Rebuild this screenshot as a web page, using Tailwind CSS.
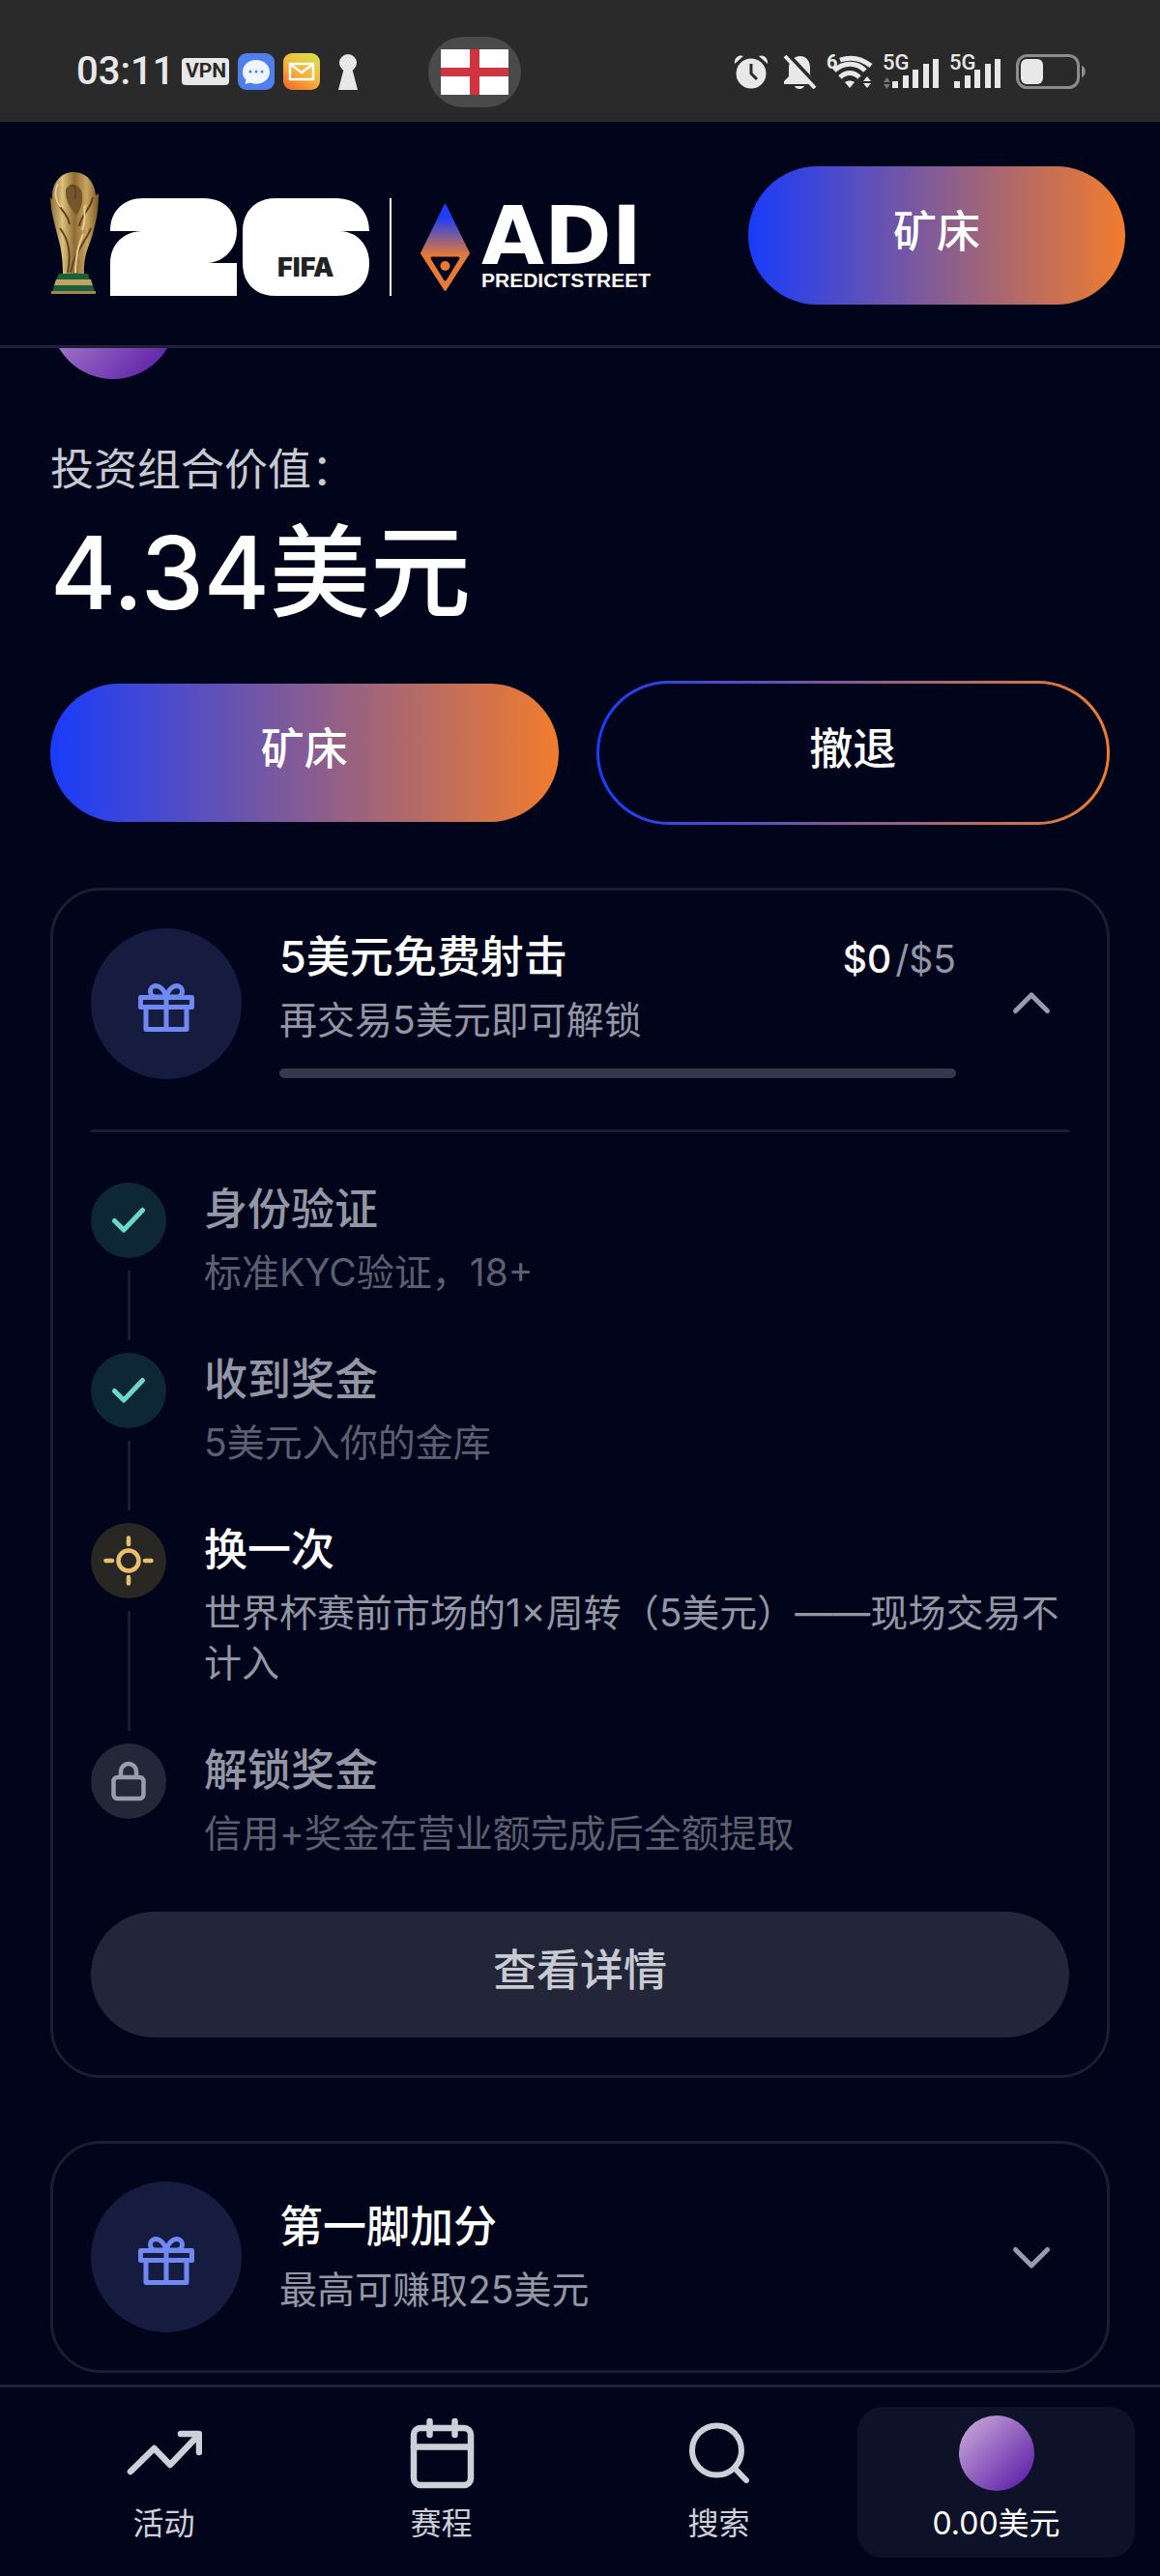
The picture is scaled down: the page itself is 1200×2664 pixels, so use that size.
<!DOCTYPE html>
<html lang="zh-CN">
<head>
    <meta charset="UTF-8">
    <meta name="viewport" content="width=device-width, initial-scale=1.0">
    <title>ADI Predictstreet</title>
    <script src="https://cdn.jsdelivr.net/npm/@tailwindcss/browser@4"></script>
</head>
<body class="flex min-h-screen flex-col bg-[#01051b] font-['Inter','Noto_Sans_CJK_SC',sans-serif] text-white">

    <!-- Shared icons -->
    <svg class="hidden">
        <symbol id="gift" viewBox="0 0 78 78">
            <g transform="translate(10 18)" fill="none" stroke="#7088f2" stroke-width="5" stroke-linejoin="round">
                <rect x="2.5" y="14.5" width="53" height="10"/>
                <path d="M8 24.5V47.5H50V24.5M29 14.5V47.5"/>
                <path d="M29 14C27 6 22 2.5 17.5 2.5A5.8 5.8 0 0 0 17.5 14ZM29 14C31 6 36 2.5 40.5 2.5A5.8 5.8 0 0 1 40.5 14Z"/>
            </g>
        </symbol>
        <symbol id="check" viewBox="0 0 78 78">
            <path d="M24.5 39.5L34 49L53.5 28.5" fill="none" stroke="#6cd9c8" stroke-width="5" stroke-linecap="round" stroke-linejoin="round"/>
        </symbol>
        <symbol id="chevron" viewBox="0 0 78 78">
            <path d="M22.5 46.5L39 30L55.5 46.5" fill="none" stroke="#989ba9" stroke-width="5" stroke-linecap="round" stroke-linejoin="round"/>
        </symbol>
    </svg>

    <!-- Status bar -->
    <div class="flex h-[126px] items-center bg-[#2a2a2a] pt-[22px] pr-[76px] pl-[79px] text-[#e8e8e8]">
        <span class="font-['Roboto',sans-serif] text-[40px] leading-none font-medium">03:11</span>
        <div class="ml-2 flex items-center gap-[9px]">
            <span class="flex h-[28px] w-[49px] items-center justify-center rounded-[4px] bg-[#e8e8e8] font-['Roboto',sans-serif] text-[21px] font-bold text-[#2a2a2a]">VPN</span>
            <svg class="size-[38px]" viewBox="0 0 38 38">
                <rect width="38" height="38" rx="9" fill="#4f7fec"/>
                <path d="M19 7C11 7 5 12 5 19.500C5 23 6 25 8.500 27.500L7.500 32L13 30.500C15 31.500 17 31.800 19 31.800C27 31.800 33 26.500 33 19.500S27 7 19 7Z" fill="#eef5ff"/>
                <circle cx="13" cy="19" r="1.500" fill="#4f7fec"/><circle cx="19" cy="19" r="1.500" fill="#4f7fec"/><circle cx="25" cy="19" r="1.500" fill="#4f7fec"/>
            </svg>
            <svg class="size-[38px]" viewBox="0 0 38 38">
                <defs>
                    <linearGradient id="mail" x1="0.2" y1="1" x2="0.8" y2="0">
                        <stop offset="0" stop-color="#f0702c"/><stop offset="0.45" stop-color="#f8b03a"/><stop offset="1" stop-color="#d8e04a"/>
                    </linearGradient>
                </defs>
                <rect width="38" height="38" rx="9" fill="url(#mail)"/>
                <path d="M7 11H31V27H7ZM8 12L19 20L30 12" fill="none" stroke="#fff" stroke-width="2.500" stroke-linejoin="round"/>
            </svg>
            <svg class="ml-[10px] h-[37px] w-[20px]" viewBox="0 0 20 37">
                <circle cx="10" cy="9" r="9" fill="#e8e8e8"/><path d="M6 14H14L20 37H0Z" fill="#e8e8e8"/>
            </svg>
        </div>
        <div class="ml-[73px] flex h-[73px] w-[96px] items-center justify-center rounded-full bg-[#4a4a4a]">
            <svg class="h-[47px] w-[70px]" viewBox="0 0 70 47">
                <path d="M0 0H70V47H0Z" fill="#fff"/><path d="M30 0H40V47H30ZM0 19H70V28H0Z" fill="#d0343f"/>
            </svg>
        </div>
        <div class="ml-auto flex items-center gap-[10px] font-['Roboto',sans-serif]">
            <svg class="mr-[5px] h-[36px] w-[36px]" viewBox="0 0 36 36">
                <path d="M1 10C0 4 5 0 10 2ZM35 10C36 4 31 0 26 2Z" fill="#e8e8e8"/>
                <circle cx="18" cy="20" r="15.500" fill="#e8e8e8"/>
                <path d="M18 10V20L24 26" fill="none" stroke="#2a2a2a" stroke-width="3"/>
            </svg>
            <svg class="h-[36px] w-[35px]" viewBox="0 0 35 36">
                <path d="M18 2C24 2 28 7 28 14V21L32 28V31H1V28L6 23V14C6 7 11 2 18 2ZM12 33H22C21 37 13 37 12 33Z" fill="#e8e8e8"/>
                <path d="M5 0L37 34" stroke="#2a2a2a" stroke-width="4"/>
                <path d="M2 2L33 35" stroke="#e8e8e8" stroke-width="4"/>
            </svg>
            <svg class="h-[38px] w-[48px] overflow-visible" viewBox="0 0 48 38">
                <g fill="none" stroke="#e8e8e8" stroke-width="5">
                    <path d="M14 7C26 3 37 6 46 13"/><path d="M8 18C18 9 31 9 40 18"/><path d="M14 25C20 19 28 19 34 25"/>
                </g>
                <path d="M19 30C22 28 26 28 29 30L24 36ZM38 29L42 24L46 29ZM38 31H46L42 36Z" fill="#e8e8e8"/>
                <text x="0" y="16" font-size="20" font-weight="700" fill="#e8e8e8">6</text>
            </svg>
            <svg class="h-[36px] w-[59px] overflow-visible" viewBox="0 0 59 36">
                <text x="0" y="16" font-size="22" font-weight="500" fill="#e8e8e8">5G</text>
                <path d="M10 28H16V35H10ZM21 22H27V35H21ZM31 16H37V35H31ZM42 10H48V35H42ZM52 5H58V35H52Z" fill="#e8e8e8"/>
                <path d="M1 29L4.500 24L8 29ZM1 31H8L4.500 36Z" fill="#777"/>
            </svg>
            <svg class="h-[36px] w-[55px] overflow-visible" viewBox="0 0 55 36">
                <text x="0" y="16" font-size="22" font-weight="500" fill="#e8e8e8">5G</text>
                <path d="M5 28H11V35H5ZM16 22H22V35H16ZM26 16H32V35H26ZM37 10H43V35H37ZM47 5H53V35H47Z" fill="#e8e8e8"/>
            </svg>
            <svg class="ml-1 h-[36px] w-[73px]" viewBox="0 0 73 36">
                <rect x="1.500" y="1.500" width="63" height="33" rx="10" fill="none" stroke="#8c8c8c" stroke-width="3"/>
                <rect x="5" y="5" width="23" height="26" rx="6" fill="#e8e8e8"/>
                <path d="M68 12C73 13 73 23 68 24Z" fill="#8c8c8c"/>
            </svg>
        </div>
    </div>

    <!-- Header -->
    <header class="flex items-center justify-between border-b-[3px] border-[#1f2237] pt-[46px] pr-9 pb-[42px] pl-[52px]">
        <a href="#" class="flex items-end pb-1" aria-label="FIFA 26 ADI Predictstreet">
            <svg class="h-[128px] w-[50px]" viewBox="0 0 50 128">
                <defs>
                    <linearGradient id="gold" x1="0" x2="1">
                        <stop offset="0" stop-color="#8a6a35"/><stop offset="0.25" stop-color="#dcc07c"/><stop offset="0.5" stop-color="#8f6b34"/><stop offset="0.75" stop-color="#c9a560"/><stop offset="1" stop-color="#7a5827"/>
                    </linearGradient>
                </defs>
                <path d="M24 0C38 0 46 11 47 24L50 22C50 45 46 55 44 64C41 76 34 84 35 106H13C13 88 11 78 7 64C4 50 1 44 0 26L2 28C1 11 11 0 24 0Z" fill="url(#gold)"/>
                <path d="M16 18C20 10 30 11 33 22C34 32 31 40 27 44C21 38 15 30 16 18Z" fill="#76552a"/>
                <path d="M21 14C26 12 28 20 25 28M6 28C10 40 18 42 20 54M44 26C42 38 32 44 30 56M10 58C18 68 22 84 18 104M42 58C38 70 24 84 21 104" fill="none" stroke="#5f431f" stroke-width="2"/>
                <path d="M8 12C3 20 6 32 11 36M36 34C34 44 38 48 33 60M34 64C28 78 26 90 26 104" fill="none" stroke="#e6cd8c" stroke-width="2"/>
                <path d="M9 105H39L41 112H6Z" fill="#17613f"/><path d="M6 111H42L44 117H4Z" fill="#c2a25e"/>
                <path d="M4 117H44L46 124H2Z" fill="#17613f"/><path d="M1 123H47V126H1Z" fill="#a88348"/>
            </svg>
            <svg class="ml-3 h-[101px] w-[268px]" viewBox="0 0 268 101">
                <g fill="#fff">
                    <path d="M0 34C0 13 14 0 34 0H97C118 0 131 14 131 34C131 52 118 66 101 67H131V101H0V67C0 48 13 35 32 34Z"/>
                    <path d="M171 0H234C255 0 268 14 268 34H237C255 34 268 48 268 67C268 88 255 101 234 101H171C150 101 137 88 137 67V34C137 14 150 0 171 0Z"/>
                </g>
                <text x="173" y="81" font-size="27" font-weight="900" fill="#222">FIFA</text>
            </svg>
            <div class="ml-[21px] h-[101px] w-[2px] bg-white"></div>
            <svg class="ml-[30px] h-[95px] w-[51px]" viewBox="0 0 51 95">
                <defs>
                    <linearGradient id="gem" x1="0" y1="0" x2="0" y2="1">
                        <stop offset="0.15" stop-color="#1d3ff5"/><stop offset="0.6" stop-color="#e87a35"/>
                    </linearGradient>
                </defs>
                <path d="M25.500 1L50 51L25.500 89L1 51Z" fill="url(#gem)" stroke="url(#gem)" stroke-width="2" stroke-linejoin="round"/>
                <path d="M12 56H39L25.500 78Z" fill="#01051b" stroke="#01051b" stroke-width="3" stroke-linejoin="round"/>
                <circle cx="25.500" cy="64" r="5" fill="#e87a35"/>
            </svg>
            <div class="ml-3 flex flex-col pb-1">
                <span class="font-['DejaVu_Sans',sans-serif] text-[84px] leading-[68px] font-bold">ADI</span>
                <span class="font-['Liberation_Sans',sans-serif] text-[21px] leading-6 font-bold">PREDICTSTREET</span>
            </div>
        </a>
        <button class="h-[143px] w-[390px] rounded-full bg-linear-to-r/srgb from-[#193cfb] to-[#f17c2d] pb-2 text-[45px] font-medium">矿床</button>
    </header>

    <main class="px-[52px] pb-3">
        <!-- Profile avatar, scrolled under the header -->
        <div class="flex h-8 items-end overflow-hidden">
            <div class="size-[130px] shrink-0 rounded-full bg-linear-to-br/srgb from-[#d0b2dc] to-[#5312a4]"></div>
        </div>

        <!-- Portfolio value -->
        <p class="mt-[66px] text-[45px] leading-[56px] text-[#c8cad2]">投资组合价值：</p>
        <h1 class="mt-[10px] text-[104px] leading-[136px] font-medium">4.34美元</h1>

        <div class="mt-11 flex items-center gap-[39px]">
            <button class="h-[143px] flex-1 rounded-full bg-linear-to-r/srgb from-[#193cfb] to-[#f17c2d] pb-2 text-[45px] font-medium">矿床</button>
            <button class="h-[149px] flex-1 rounded-full bg-linear-to-r/srgb from-[#193cfb] to-[#f17c2d] p-[3px] text-[45px] font-medium">
                <span class="flex h-full items-center justify-center rounded-full bg-[#01051b] pb-2">撤退</span>
            </button>
        </div>

        <!-- Free shot card -->
        <section class="mt-[65px] rounded-[52px] border-[3px] border-[#1a1e32] p-[39px]">
            <div class="flex items-center">
                <div class="flex size-[156px] items-center justify-center rounded-full bg-[#161c40]">
                    <svg class="size-[78px]"><use href="#gift"/></svg>
                </div>
                <div class="ml-[39px] flex-1">
                    <div class="flex items-baseline justify-between">
                        <h2 class="text-[45px] leading-[56px] font-medium">5美元免费射击</h2>
                        <p class="text-[39px] leading-[52px] text-[#9396a3]"><span class="mr-1 font-medium text-white">$0</span>/$5</p>
                    </div>
                    <p class="mt-[11px] text-[39px] leading-[52px] text-[#9396a3]">再交易5美元即可解锁</p>
                    <div class="mt-6 h-[10px] rounded-full bg-[#35384a]"></div>
                </div>
                <button class="ml-[39px]" aria-label="收起"><svg class="size-[78px]"><use href="#chevron"/></svg></button>
            </div>

            <ol class="mt-[52px] border-t-[3px] border-[#1a1e32] pt-[52px]">
                <li class="flex gap-[39px]">
                    <div class="flex flex-col items-center">
                        <div class="size-[78px] rounded-full bg-[#0d2737]"><svg class="size-[78px]"><use href="#check"/></svg></div>
                        <div class="my-[13px] w-[3px] flex-1 bg-[#1a1d32]"></div>
                    </div>
                    <div class="flex-1 pb-[57px]">
                        <h3 class="text-[45px] leading-[56px] font-medium text-[#9396a3]">身份验证</h3>
                        <p class="mt-[11px] text-[39px] leading-[52px] text-[#5c5f70]">标准KYC验证，18+</p>
                    </div>
                </li>
                <li class="flex gap-[39px]">
                    <div class="flex flex-col items-center">
                        <div class="size-[78px] rounded-full bg-[#0d2737]"><svg class="size-[78px]"><use href="#check"/></svg></div>
                        <div class="my-[13px] w-[3px] flex-1 bg-[#1a1d32]"></div>
                    </div>
                    <div class="flex-1 pb-[57px]">
                        <h3 class="text-[45px] leading-[56px] font-medium text-[#9396a3]">收到奖金</h3>
                        <p class="mt-[11px] text-[39px] leading-[52px] text-[#5c5f70]">5美元入你的金库</p>
                    </div>
                </li>
                <li class="flex gap-[39px]">
                    <div class="flex flex-col items-center">
                        <div class="size-[78px] rounded-full bg-[#292724]">
                            <svg class="size-[78px]" viewBox="0 0 78 78" fill="none" stroke="#e8bf6c" stroke-width="4.500" stroke-linecap="round">
                                <circle cx="39" cy="39" r="10.500"/>
                                <path d="M39 15.500V22M39 56V62.500M15.500 39H22M56 39H62.500"/>
                            </svg>
                        </div>
                        <div class="my-[13px] w-[3px] flex-1 bg-[#1a1d32]"></div>
                    </div>
                    <div class="flex-1 pb-[57px]">
                        <h3 class="text-[45px] leading-[56px] font-medium">换一次</h3>
                        <p class="mt-[11px] text-[39px] leading-[52px] text-[#9396a3]">世界杯赛前市场的1×周转（5美元）——现场交易不计入</p>
                    </div>
                </li>
                <li class="flex gap-[39px]">
                    <div class="size-[78px] rounded-full bg-[#242738]">
                        <svg class="size-[78px]" viewBox="0 0 78 78" fill="none" stroke="#9a9daa" stroke-width="4.500">
                            <rect x="23.500" y="35" width="31" height="22" rx="4"/>
                            <path d="M31 35V29A8 8 0 0 1 47 29V35"/>
                        </svg>
                    </div>
                    <div class="flex-1">
                        <h3 class="text-[45px] leading-[56px] font-medium text-[#9396a3]">解锁奖金</h3>
                        <p class="mt-[11px] text-[39px] leading-[52px] text-[#5c5f70]">信用+奖金在营业额完成后全额提取</p>
                    </div>
                </li>
            </ol>

            <button class="mt-[55px] h-[130px] w-full rounded-full bg-[#232638] pb-2 text-[45px] font-medium text-[#c8cad2]">查看详情</button>
        </section>

        <!-- First kick bonus card -->
        <section class="mt-[65px] flex items-center rounded-[52px] border-[3px] border-[#1a1e32] p-[39px]">
            <div class="flex size-[156px] items-center justify-center rounded-full bg-[#161c40]">
                <svg class="size-[78px]"><use href="#gift"/></svg>
            </div>
            <div class="ml-[39px] flex-1">
                <h2 class="text-[45px] leading-[56px] font-medium">第一脚加分</h2>
                <p class="mt-[11px] text-[39px] leading-[52px] text-[#9396a3]">最高可赚取25美元</p>
            </div>
            <button class="ml-[39px]" aria-label="展开"><svg class="size-[78px] rotate-180"><use href="#chevron"/></svg></button>
        </section>
    </main>

    <!-- Bottom navigation -->
    <nav class="sticky bottom-0 mt-auto grid grid-cols-4 border-t-[3px] border-[#1f2237] bg-[#01051b] px-[26px] py-5 text-[32px] leading-[48px] text-[#cdd0d8]">
        <a href="#" class="flex h-[156px] flex-col items-center gap-[10px] pt-[9px]">
            <svg class="size-[78px]" viewBox="0 0 78 78" fill="none" stroke="currentColor" stroke-width="6.500" stroke-linecap="round" stroke-linejoin="round">
                <path d="M4 58L28.500 34L45 51L75 19.500M56 19H75V38"/>
            </svg>
            活动
        </a>
        <a href="#" class="flex h-[156px] flex-col items-center gap-[10px] pt-[9px]">
            <svg class="size-[78px]" viewBox="0 0 78 78" fill="none" stroke="currentColor" stroke-width="6.500" stroke-linecap="round">
                <rect x="10" y="13" width="59" height="59" rx="7"/>
                <path d="M10 32.500H69M26.500 6V20M52.500 6V20"/>
            </svg>
            赛程
        </a>
        <a href="#" class="flex h-[156px] flex-col items-center gap-[10px] pt-[9px]">
            <svg class="size-[78px]" viewBox="0 0 78 78" fill="none" stroke="currentColor" stroke-width="6" stroke-linecap="round">
                <circle cx="36.500" cy="36" r="25.500"/>
                <path d="M55 54.500L67 67"/>
            </svg>
            搜索
        </a>
        <a href="#" class="flex h-[156px] flex-col items-center gap-[10px] rounded-[26px] bg-[#0e1229] pt-[9px] text-white">
            <div class="size-[78px] rounded-full bg-linear-to-br/srgb from-[#d0b2dc] to-[#5312a4]"></div>
            0.00美元
        </a>
    </nav>

</body>
</html>
